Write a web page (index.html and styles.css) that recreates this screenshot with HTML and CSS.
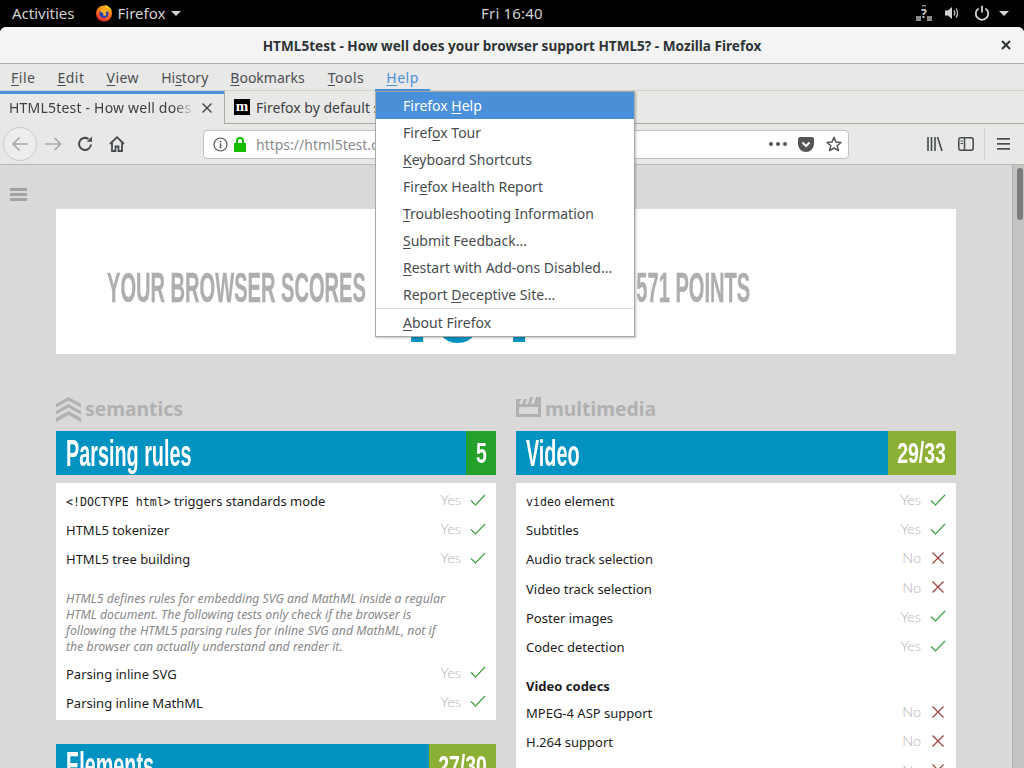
FILE: index.html
```html
<!DOCTYPE html>
<html>
<head>
    <title>HTML5test - How well does your browser support HTML5?</title>
    <link rel="stylesheet" href="styles.css">
</head>
<body>
    <div class="topbar">
        <span class="activities">Activities</span>
        <span class="app-name">
            <svg class="fx-logo" width="18" height="18" viewBox="0 0 18 18">
                <defs>
                    <linearGradient id="fxg" x1="0.7" y1="0" x2="0.3" y2="1">
                        <stop offset="0" stop-color="#ffc21a"/>
                        <stop offset="0.55" stop-color="#ff6a1a"/>
                        <stop offset="1" stop-color="#e0263c"/>
                    </linearGradient>
                </defs>
                <circle cx="9" cy="9.5" r="8" fill="url(#fxg)"/>
                <circle cx="9" cy="9.5" r="4.6" fill="#2b3fb5"/>
                <path d="M5 7 C7 4 12 4 14 8 C12 7 10 8 11 9 C12 10 11 12 8 12 C10 11 8 9 5 7 Z" fill="#ffb01f"/>
                <path d="M10 1 C13 1.5 16 4 17 8 C15 5 13 4 11 4 Z" fill="#ffd21f"/>
            </svg>
            Firefox
            <svg class="caret" width="10" height="5" viewBox="0 0 10 5"><path d="M0 0H10L5 5Z" fill="#d3d3d3"/></svg>
        </span>
        <span class="clock">Fri 16:40</span>
        <span class="status">
            <svg class="st-net" width="16" height="16" viewBox="0 0 16 16" fill="#8a8a8a">
                <rect x="0" y="11" width="5" height="5"/>
                <rect x="11" y="11" width="5" height="5"/>
                <rect x="6" y="0" width="4" height="1.5"/>
                <text x="5" y="13" class="net-mark">?</text>
            </svg>
            <svg class="st-vol" width="16" height="16" viewBox="0 0 16 16" fill="none" stroke="#b5b5b5" stroke-width="1.4">
                <path d="M1 5.5H4L8 2V14L4 10.5H1Z" fill="#d3d3d3" stroke="none"/>
                <path d="M10 5.5C11 7 11 9 10 10.5"/>
                <path d="M12 3.5C14 6 14 10 12 12.5"/>
            </svg>
            <svg class="st-power" width="16" height="16" viewBox="0 0 16 16" fill="none" stroke="#d3d3d3" stroke-width="1.8">
                <path d="M4.6 3.4A6.2 6.2 0 1 0 11.4 3.4"/>
                <path d="M8 0.8V7.5"/>
            </svg>
            <svg class="st-caret" width="10" height="5" viewBox="0 0 10 5"><path d="M0 0H10L5 5Z" fill="#d3d3d3"/></svg>
        </span>
    </div>

    <div class="window">
        <div class="titlebar">
            <span>HTML5test - How well does your browser support HTML5? - Mozilla Firefox</span>
            <svg class="win-close" width="10" height="10" viewBox="0 0 10 10"><path d="M1 1L9 9M9 1L1 9" stroke="#2e3436" stroke-width="2"/></svg>
        </div>

        <div class="menubar">
            <span class="wide"><u>F</u>ile</span>
            <span class="wide"><u>E</u>dit</span>
            <span class="wide"><u>V</u>iew</span>
            <span>Hi<u>s</u>tory</span>
            <span class="bookmarks"><u>B</u>ookmarks</span>
            <span class="wide"><u>T</u>ools</span>
            <span class="wide menu-open"><u>H</u>elp</span>
        </div>

        <div class="tabbar">
            <div class="tab tab-active">
                <span class="tab-label">HTML5test - How well does your browser</span>
                <svg width="10" height="10" viewBox="0 0 10 10"><path d="M0.5 0.5L9.5 9.5M9.5 0.5L0.5 9.5" stroke="#444" stroke-width="1.4"/></svg>
            </div>
            <div class="tab tab-other">
                <span class="favicon">m</span>
                <span class="tab-label">Firefox by default s</span>
            </div>
        </div>

        <div class="navbar">
            <span class="back-btn">
                <svg width="18" height="16" viewBox="0 0 18 16" fill="none" stroke="#a9a9a9" stroke-width="1.7"><path d="M17 8H2M8.5 1.5L2 8L8.5 14.5"/></svg>
            </span>
            <svg class="fwd" width="17" height="14" viewBox="0 0 17 14" fill="none" stroke="#a9a9a9" stroke-width="1.7"><path d="M0 7H15M9.5 1L15.5 7L9.5 13"/></svg>
            <svg class="reload" width="16" height="16" viewBox="0 0 16 16" fill="none" stroke="#464b50" stroke-width="2"><path d="M14 8.5A6 6 0 1 1 11.5 3"/><path d="M15 0.5V5.8H9.7" fill="#464b50" stroke="none"/></svg>
            <svg class="home" width="16" height="16" viewBox="0 0 16 16" fill="none" stroke="#464b50" stroke-width="1.8"><path d="M1 8L8 1.2L15 8"/><path d="M3 6.5V15H6.5V10.5H9.5V15H13V6.5"/></svg>
            <div class="urlbar">
                <svg width="15" height="15" viewBox="0 0 15 15"><circle cx="7.5" cy="7.5" r="6.5" fill="none" stroke="#555" stroke-width="1.2"/><rect x="6.8" y="6.4" width="1.5" height="4.8" fill="#555"/><rect x="6.8" y="3.7" width="1.5" height="1.6" fill="#555"/></svg>
                <svg class="lock" width="12" height="15" viewBox="0 0 12 15"><path d="M0 6H12V15H0Z" fill="#12bc00"/><path d="M3 7V4A3 3 0 0 1 9 4V7" fill="none" stroke="#12bc00" stroke-width="2"/></svg>
                <span class="url">https://html5test.com/</span>
                <span class="url-dots">
                    <i></i><i></i><i></i>
                </span>
                <svg class="pocket" width="16" height="15" viewBox="0 0 16 15"><path d="M0 2A2 2 0 0 1 2 0H14A2 2 0 0 1 16 2V7A8 8 0 0 1 0 7Z" fill="#555"/><path d="M4.5 5.5L8 9L11.5 5.5" fill="none" stroke="#fff" stroke-width="2"/></svg>
                <svg class="star" width="16" height="16" viewBox="0 0 16 16"><path d="M8 1.4L10 6L15 6.4L11.2 9.7L12.4 14.6L8 12L3.6 14.6L4.8 9.7L1 6.4L6 6Z" fill="none" stroke="#555" stroke-width="1.5" stroke-linejoin="round"/></svg>
            </div>
            <svg class="library" width="16" height="14" viewBox="0 0 16 14" fill="none" stroke="#464b50" stroke-width="1.6"><path d="M1 0V14M4.5 0V14M8 0V14M10.5 0L15 14"/></svg>
            <svg class="sidebar-btn" width="16" height="14" viewBox="0 0 16 14" fill="none" stroke="#464b50" stroke-width="1.5"><rect x="0.8" y="0.8" width="14.4" height="12.4" rx="2"/><path d="M6.5 1V13"/><path d="M2.5 4H5M2.5 6.5H5" stroke-width="1"/></svg>
            <span class="nav-sep"></span>
            <svg class="burger" width="13" height="12" viewBox="0 0 13 12" fill="#464b50"><rect width="13" height="1.7"/><rect y="5" width="13" height="1.7"/><rect y="10" width="13" height="1.7"/></svg>
        </div>

        <div class="content">
            <div class="page">
                <div class="side-toggle"><i></i><i></i><i></i></div>

                <div class="score-panel">
                    <div class="score-line">
                        <div class="score-left"><span class="cond score-text">YOUR BROWSER SCORES</span></div>
                        <div class="score-right"><span class="cond cond-end score-text">OUT OF 571 POINTS</span></div>
                    </div>
                    <div class="score-number">
                        <span class="cond cond-mid">484</span>
                    </div>
                </div>

                <div class="columns">
                    <div class="column">
                        <div class="section-label">
                            <svg width="25" height="25" viewBox="0 0 25 25" fill="#b1b1b1">
                                <path d="M12.5 0L25 7V10.5L12.5 3.5L0 10.5V7Z"/>
                                <path d="M12.5 7L25 14V17.5L12.5 10.5L0 17.5V14Z"/>
                                <path d="M12.5 14L25 21V25L12.5 18L0 25V21Z"/>
                            </svg>
                            semantics
                        </div>
                        <div class="card-head">
                            <h2><span class="cond">Parsing rules</span></h2>
                            <span class="head-score head-full"><span class="cond cond-mid">5</span></span>
                        </div>
                        <div class="card">
                            <div class="row"><span class="name"><code>&lt;!DOCTYPE html&gt;</code> triggers standards mode</span><span class="res">Yes</span><svg class="mark" width="16" height="12" viewBox="0 0 16 12"><path d="M1 6.5L5.5 11L15 1" fill="none" stroke="#3a9e3a" stroke-width="1.1"/></svg></div>
                            <div class="row"><span class="name">HTML5 tokenizer</span><span class="res">Yes</span><svg class="mark" width="16" height="12" viewBox="0 0 16 12"><path d="M1 6.5L5.5 11L15 1" fill="none" stroke="#3a9e3a" stroke-width="1.1"/></svg></div>
                            <div class="row"><span class="name">HTML5 tree building</span><span class="res">Yes</span><svg class="mark" width="16" height="12" viewBox="0 0 16 12"><path d="M1 6.5L5.5 11L15 1" fill="none" stroke="#3a9e3a" stroke-width="1.1"/></svg></div>
                            <p class="note">HTML5 defines rules for embedding SVG and MathML inside a regular HTML document. The following tests only check if the browser is following the HTML5 parsing rules for inline SVG and MathML, not if the browser can actually understand and render it.</p>
                            <div class="row"><span class="name">Parsing inline SVG</span><span class="res">Yes</span><svg class="mark" width="16" height="12" viewBox="0 0 16 12"><path d="M1 6.5L5.5 11L15 1" fill="none" stroke="#3a9e3a" stroke-width="1.1"/></svg></div>
                            <div class="row"><span class="name">Parsing inline MathML</span><span class="res">Yes</span><svg class="mark" width="16" height="12" viewBox="0 0 16 12"><path d="M1 6.5L5.5 11L15 1" fill="none" stroke="#3a9e3a" stroke-width="1.1"/></svg></div>
                        </div>
                        <div class="card-head card-next">
                            <h2><span class="cond">Elements</span></h2>
                            <span class="head-score head-elements"><span class="cond cond-mid">27/30</span></span>
                        </div>
                    </div>

                    <div class="column">
                        <div class="section-label">
                            <svg class="clapper" width="25" height="20" viewBox="0 0 25 20" fill="#b1b1b1">
                                <path d="M0 2H5L3 7H6L8 2H11L9 7H12L14 0H17L15 7H18L20 0H25V20H0Z M3 10V17H22V10Z" fill-rule="evenodd"/>
                            </svg>
                            multimedia
                        </div>
                        <div class="card-head">
                            <h2><span class="cond">Video</span></h2>
                            <span class="head-score head-video"><span class="cond cond-mid">29/33</span></span>
                        </div>
                        <div class="card">
                            <div class="row"><span class="name"><code>video</code> element</span><span class="res">Yes</span><svg class="mark" width="16" height="12" viewBox="0 0 16 12"><path d="M1 6.5L5.5 11L15 1" fill="none" stroke="#3a9e3a" stroke-width="1.1"/></svg></div>
                            <div class="row"><span class="name">Subtitles</span><span class="res">Yes</span><svg class="mark" width="16" height="12" viewBox="0 0 16 12"><path d="M1 6.5L5.5 11L15 1" fill="none" stroke="#3a9e3a" stroke-width="1.1"/></svg></div>
                            <div class="row"><span class="name">Audio track selection</span><span class="res">No</span><svg class="mark" width="16" height="12" viewBox="0 0 16 12"><path d="M2.5 0.5L13.5 11.5M13.5 0.5L2.5 11.5" fill="none" stroke="#9e3a3a" stroke-width="1.1"/></svg></div>
                            <div class="row"><span class="name">Video track selection</span><span class="res">No</span><svg class="mark" width="16" height="12" viewBox="0 0 16 12"><path d="M2.5 0.5L13.5 11.5M13.5 0.5L2.5 11.5" fill="none" stroke="#9e3a3a" stroke-width="1.1"/></svg></div>
                            <div class="row"><span class="name">Poster images</span><span class="res">Yes</span><svg class="mark" width="16" height="12" viewBox="0 0 16 12"><path d="M1 6.5L5.5 11L15 1" fill="none" stroke="#3a9e3a" stroke-width="1.1"/></svg></div>
                            <div class="row"><span class="name">Codec detection</span><span class="res">Yes</span><svg class="mark" width="16" height="12" viewBox="0 0 16 12"><path d="M1 6.5L5.5 11L15 1" fill="none" stroke="#3a9e3a" stroke-width="1.1"/></svg></div>
                            <div class="row-title">Video codecs</div>
                            <div class="row"><span class="name">MPEG-4 ASP support</span><span class="res">No</span><svg class="mark" width="16" height="12" viewBox="0 0 16 12"><path d="M2.5 0.5L13.5 11.5M13.5 0.5L2.5 11.5" fill="none" stroke="#9e3a3a" stroke-width="1.1"/></svg></div>
                            <div class="row"><span class="name">H.264 support</span><span class="res">No</span><svg class="mark" width="16" height="12" viewBox="0 0 16 12"><path d="M2.5 0.5L13.5 11.5M13.5 0.5L2.5 11.5" fill="none" stroke="#9e3a3a" stroke-width="1.1"/></svg></div>
                            <div class="row"><span class="name">H.265 support</span><span class="res">No</span><svg class="mark" width="16" height="12" viewBox="0 0 16 12"><path d="M2.5 0.5L13.5 11.5M13.5 0.5L2.5 11.5" fill="none" stroke="#9e3a3a" stroke-width="1.1"/></svg></div>
                        </div>
                    </div>
                </div>
            </div>
            <div class="scrollbar"><div class="thumb"></div></div>
        </div>

        <div class="help-menu">
            <div class="help-item help-active">Firefox <u>H</u>elp</div>
            <div class="help-item">Firef<u>o</u>x Tour</div>
            <div class="help-item"><u>K</u>eyboard Shortcuts</div>
            <div class="help-item">Fir<u>e</u>fox Health Report</div>
            <div class="help-item"><u>T</u>roubleshooting Information</div>
            <div class="help-item"><u>S</u>ubmit Feedback...</div>
            <div class="help-item"><u>R</u>estart with Add-ons Disabled...</div>
            <div class="help-item">Report <u>D</u>eceptive Site...</div>
            <div class="help-sep"></div>
            <div class="help-item"><u>A</u>bout Firefox</div>
        </div>
    </div>
</body>
</html>
```

FILE: styles.css
```css
* {
    box-sizing: border-box;
}

html, body {
    margin: 0;
    height: 768px;
    overflow: hidden;
}

body {
    background-color: black;
    font-family: "Noto Sans", sans-serif;
    font-size: 14px;
}

u {
    text-underline-offset: 2px;
}

.topbar {
    height: 27px;
    display: flex;
    align-items: center;
    padding-bottom: 1px;
    color: #d3d3d3;
    position: relative;
    font-size: 15px;
}

.activities {
    margin-left: 12px;
}

.app-name {
    margin-left: 20px;
    display: flex;
    align-items: center;
    gap: 5px;
}

.caret {
    margin-left: 1px;
}

.clock {
    position: absolute;
    left: 481px;
    top: 3px;
    letter-spacing: 0.2px;
}

.status {
    margin-left: auto;
    margin-right: 15px;
    display: flex;
    align-items: center;
}

.st-vol {
    margin-left: 12px;
}

.st-power {
    margin-left: 14px;
}

.st-caret {
    margin-left: 9px;
}

.net-mark {
    font-size: 12px;
    font-weight: bold;
    fill: #d3d3d3;
}

.window {
    position: relative;
    height: 741px;
    background-color: #e8e8e7;
    border-radius: 6px 6px 0 0;
    display: flex;
    flex-direction: column;
}

.titlebar {
    height: 37px;
    flex-shrink: 0;
    background-color: #f4f4f4;
    border-bottom: 1px solid #aeaea8;
    border-radius: 6px 6px 0 0;
    display: flex;
    align-items: center;
    justify-content: center;
    font-size: 13.6px;
    font-weight: 700;
    color: #2e3436;
    position: relative;
}

.win-close {
    position: absolute;
    right: 13px;
    top: 13px;
}

.menubar {
    height: 27px;
    flex-shrink: 0;
    display: flex;
    align-items: center;
    gap: 22px;
    padding-left: 11px;
    color: #4b4f52;
    border-bottom: 1px solid #cfcfcc;
}

.wide {
    letter-spacing: 0.5px;
}

.bookmarks {
    margin-right: 1px;
}

.menu-open {
    color: #4a90d9;
    position: relative;
}

.menu-open::after {
    content: "";
    position: absolute;
    left: -11px;
    right: -11px;
    bottom: -5px;
    height: 3px;
    background-color: #4a90d9;
}

.tabbar {
    height: 33px;
    flex-shrink: 0;
    display: flex;
}

.tab {
    width: 224px;
    display: flex;
    align-items: center;
    color: #3d4144;
}

.tab-active {
    border-top: 3px solid #4a90d9;
    padding: 0 9px 3px;
    letter-spacing: 0.2px;
}

.tab-active .tab-label {
    width: 188px;
    -webkit-mask-image: linear-gradient(to right, black 165px, transparent 186px);
    mask-image: linear-gradient(to right, black 165px, transparent 186px);
}

.tab-active svg {
    margin-left: 5px;
    flex-shrink: 0;
}

.tab-other {
    flex: 1;
    border-left: 1px solid #a8a8a5;
    border-bottom: 1px solid #a8a8a5;
    padding-left: 9px;
    gap: 6px;
}

.tab-label {
    white-space: nowrap;
    overflow: hidden;
}

.favicon {
    width: 16px;
    height: 16px;
    background-color: black;
    color: white;
    font-family: "Liberation Serif", serif;
    font-weight: bold;
    font-size: 15px;
    line-height: 14px;
    text-align: center;
}

.navbar {
    height: 41px;
    flex-shrink: 0;
    display: flex;
    align-items: center;
    border-bottom: 1px solid #b9b9b5;
    position: relative;
}

.back-btn {
    margin-left: 3px;
    width: 34px;
    height: 34px;
    border: 1px solid #c8c8c6;
    border-radius: 50%;
    background-color: #ededec;
    display: flex;
    align-items: center;
    justify-content: center;
    flex-shrink: 0;
}

.fwd {
    margin-left: 8px;
}

.reload {
    margin-left: 15px;
}

.home {
    margin-left: 16px;
}

.urlbar {
    margin-left: 78px;
    width: 646px;
    height: 29px;
    background-color: white;
    border: 1px solid #c2c2c0;
    border-radius: 4px;
    display: flex;
    align-items: center;
    padding-left: 9px;
}

.lock {
    margin-left: 6px;
}

.url {
    margin-left: 10px;
    color: #8b8b8b;
}

.url-dots {
    margin-left: auto;
    display: flex;
    gap: 3px;
}

.url-dots i {
    width: 4px;
    height: 4px;
    border-radius: 50%;
    background-color: #555;
}

.pocket {
    margin-left: 11px;
}

.star {
    margin-left: 12px;
    margin-right: 6px;
}

.library {
    margin-left: 78px;
}

.sidebar-btn {
    margin-left: 15px;
}

.nav-sep {
    width: 1px;
    height: 32px;
    background-color: #d2d2d0;
    margin-left: 10px;
}

.burger {
    margin-left: 12px;
}

.content {
    flex: 1;
    min-height: 0;
    display: flex;
    overflow: hidden;
    background-color: #d9d9d9;
}

.page {
    width: 1012px;
    position: relative;
    font-family: "Noto Sans", sans-serif;
    padding: 44px 56px 0;
}

.side-toggle {
    position: absolute;
    left: 10px;
    top: 23px;
    width: 17px;
}

.side-toggle i {
    display: block;
    height: 3px;
    background-color: #a3a3a3;
    margin-bottom: 2px;
}

.scrollbar {
    flex: 1;
    background-color: #c2c4c2;
    border-left: 1px solid #b0b0ae;
    padding: 3px 2px;
}

.thumb {
    width: 6px;
    height: 52px;
    margin-left: 2px;
    border-radius: 3px;
    background-color: #7b7b7b;
}

.cond {
    display: inline-block;
    font-family: "Liberation Sans Narrow", "Liberation Sans", sans-serif;
    font-weight: bold;
    white-space: nowrap;
    transform: scaleX(0.55);
    transform-origin: 0 50%;
}

.cond-end {
    transform-origin: 100% 50%;
}

.cond-mid {
    transform-origin: 50% 50%;
}

.score-panel {
    background-color: white;
    height: 145px;
    overflow: hidden;
}

.score-line {
    width: 694px;
    padding: 56px 0 0 51px;
    display: flex;
}

.score-left {
    width: 320px;
}

.score-right {
    width: 323px;
    display: flex;
    justify-content: flex-end;
}

.score-text {
    font-size: 43px;
    line-height: 44px;
    color: #aeaeae;
    transform: scaleX(0.467);
    -webkit-text-stroke: 0.4px #aeaeae;
}

.score-number {
    width: 802px;
    display: flex;
    justify-content: center;
    color: #0093c2;
    font-size: 148px;
    line-height: 148px;
    margin-top: -92px;
}

.score-number .cond {
    transform: scaleX(0.62);
}

.columns {
    display: flex;
    gap: 20px;
    margin-top: 43px;
}

.column {
    width: 440px;
}

.section-label {
    height: 34px;
    padding-bottom: 12px;
    display: flex;
    align-items: center;
    gap: 4px;
    font-size: 19.3px;
    font-weight: 700;
    color: #b1b1b1;
}

.section-label svg {
    margin-top: 2px;
}

.section-label .clapper {
    margin-top: -2px;
}

.card-head {
    height: 44px;
    background-color: #0093c2;
    color: white;
    display: flex;
    justify-content: space-between;
    align-items: center;
}

.card-head h2 {
    margin: 0 0 0 10px;
    font-size: 36px;
    line-height: 44px;
    font-weight: normal;
}

.head-score {
    height: 44px;
    display: flex;
    justify-content: center;
    font-size: 30px;
    line-height: 44px;
}

.head-score .cond {
    transform: scaleX(0.65);
}

.head-full {
    width: 30px;
    background-color: #25a02b;
}

.head-video {
    width: 68px;
    background-color: #8bb035;
}

.head-elements {
    width: 67px;
    background-color: #8bb035;
}

.card {
    background-color: white;
    margin-top: 8px;
    padding: 3.5px 10px 2.5px;
}

.card-next {
    margin-top: 24px;
}

.row {
    height: 29.2px;
    display: flex;
    align-items: center;
    font-size: 13px;
    color: #1c1c1c;
}

.name {
    flex: 1;
}

code {
    font-family: "DejaVu Sans Mono", monospace;
    font-size: 11.6px;
}

.res {
    color: #b4b4b4;
    font-family: Lato, "Noto Sans", sans-serif;
    font-size: 14.5px;
    font-weight: 300;
    margin-right: 9px;
    position: relative;
    top: -1.5px;
}

.mark {
    position: relative;
    top: -1.5px;
}

.note {
    margin: 17px 35px 4px 0;
    font-size: 12.3px;
    line-height: 16px;
    font-style: italic;
    color: #888;
}

.row-title {
    padding-top: 15px;
    height: 37px;
    font-size: 13px;
    font-weight: 700;
    color: #1c1c1c;
}

.help-menu {
    position: absolute;
    left: 375px;
    top: 64px;
    width: 260px;
    height: 246px;
    background-color: white;
    border: 1px solid #a9a9a7;
    box-shadow: 1px 1px 2px rgba(0, 0, 0, 0.25);
    color: #484c4f;
}

.help-item {
    height: 27px;
    line-height: 27px;
    padding-left: 27px;
}

.help-active {
    background-color: #4a90d9;
    color: white;
}

.help-sep {
    height: 1px;
    background-color: #dedede;
}
```
